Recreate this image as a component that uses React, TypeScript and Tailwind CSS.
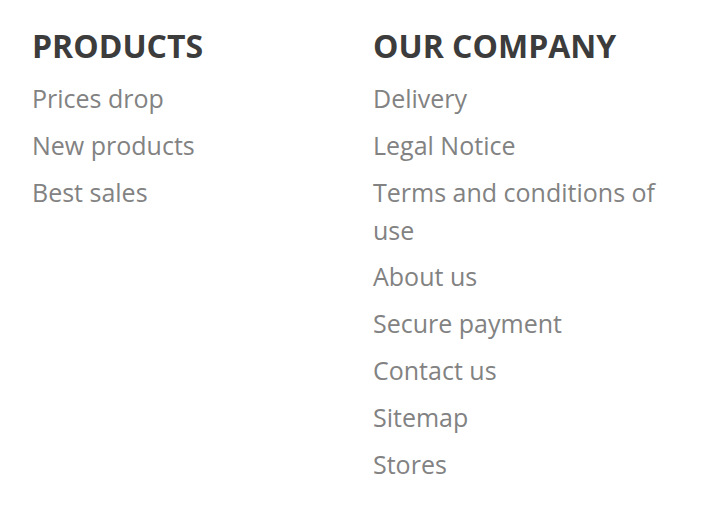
export default function App() {
  const products = ["Prices drop", "New products", "Best sales"];
  const company = [
    "Delivery",
    "Legal Notice",
    "Terms and conditions of use",
    "About us",
    "Secure payment",
    "Contact us",
    "Sitemap",
    "Stores",
  ];
  const Col = ({ title, items, w }: { title: string; items: string[]; w: string }) => (
    <div className={w}>
      <h3 className="text-[32px] leading-[44px] font-bold text-[#3c3c3c] uppercase">{title}</h3>
      <ul className="mt-[11px] flex flex-col gap-[8.8px]">
        {items.map((i) => (
          <li key={i} className="text-[25px] leading-[38px] text-[#828282]">
            {i}
          </li>
        ))}
      </ul>
    </div>
  );
  return (
    <div
      className="w-[710px] h-[508px] bg-white flex pl-[32px] pr-[32px] pt-[24px]"
      style={{ fontFamily: '"Open Sans", sans-serif' }}
    >
      <Col title="Products" items={products} w="w-[341px] shrink-0" />
      <Col title="Our company" items={company} w="w-[305px] shrink-0" />
    </div>
  );
}
